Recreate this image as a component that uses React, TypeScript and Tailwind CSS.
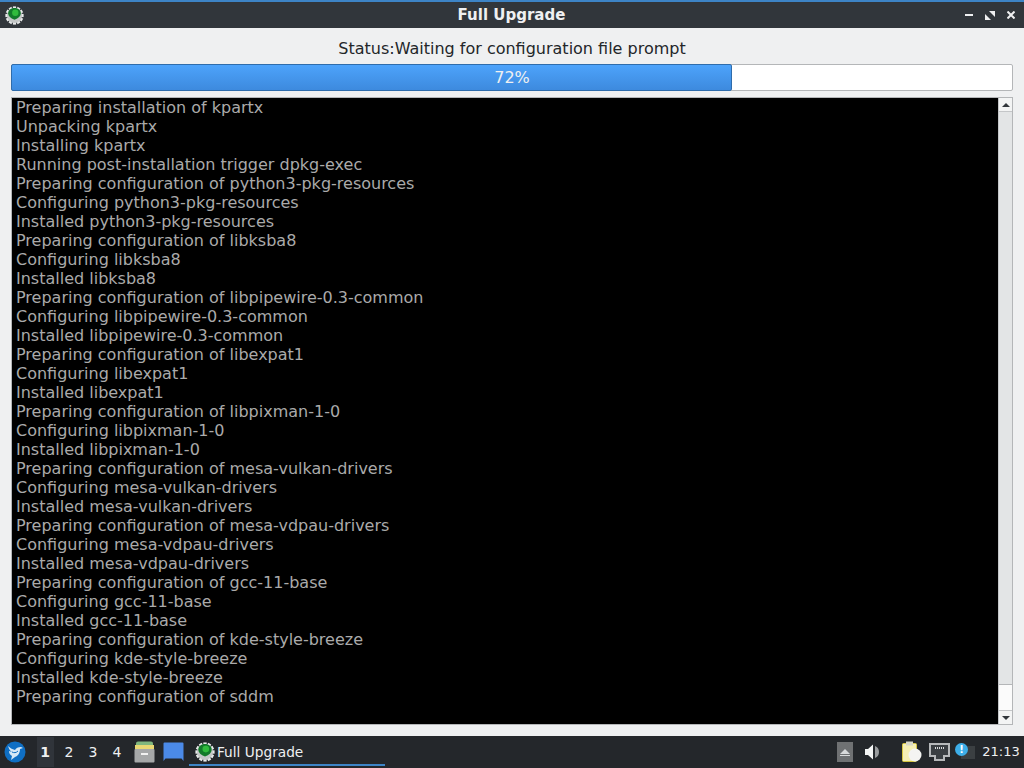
const logLines = [
  "Preparing installation of kpartx",
  "Unpacking kpartx",
  "Installing kpartx",
  "Running post-installation trigger dpkg-exec",
  "Preparing configuration of python3-pkg-resources",
  "Configuring python3-pkg-resources",
  "Installed python3-pkg-resources",
  "Preparing configuration of libksba8",
  "Configuring libksba8",
  "Installed libksba8",
  "Preparing configuration of libpipewire-0.3-common",
  "Configuring libpipewire-0.3-common",
  "Installed libpipewire-0.3-common",
  "Preparing configuration of libexpat1",
  "Configuring libexpat1",
  "Installed libexpat1",
  "Preparing configuration of libpixman-1-0",
  "Configuring libpixman-1-0",
  "Installed libpixman-1-0",
  "Preparing configuration of mesa-vulkan-drivers",
  "Configuring mesa-vulkan-drivers",
  "Installed mesa-vulkan-drivers",
  "Preparing configuration of mesa-vdpau-drivers",
  "Configuring mesa-vdpau-drivers",
  "Installed mesa-vdpau-drivers",
  "Preparing configuration of gcc-11-base",
  "Configuring gcc-11-base",
  "Installed gcc-11-base",
  "Preparing configuration of kde-style-breeze",
  "Configuring kde-style-breeze",
  "Installed kde-style-breeze",
  "Preparing configuration of sddm",
];

// green gear used for the window and the task button
function GearIcon({ size }: { size: number }) {
  const teeth = [0, 30, 60, 90, 120, 150];
  return (
    <svg width={size} height={size} viewBox="0 0 24 24">
      {teeth.map((a) => (
        <rect key={a} x="10" y="0.5" width="4" height="23" fill="#e8eaea" transform={`rotate(${a} 12 12)`} />
      ))}
      <circle cx="12" cy="12" r="9.5" fill="#c4c7c7" />
      <path d="M12 2.5c5 0 8 3 8 7 0 3-3 6-8 8-5-2-8-5-8-8 0-4 3-7 8-7z" fill="#127a2a" />
      <circle cx="13" cy="8.500" r="4" fill="#30bb3c" />
    </svg>
  );
}

function TitleBar() {
  return (
    <div className="h-[28px] shrink-0 border-t-2 border-[#3d84c6] bg-[#31363b] flex items-center pl-[5px] pr-[9px]">
      <GearIcon size={19} />
      <div className="flex-1 text-center text-[#eff0f1] text-[15px] font-bold pl-[34px]">Full Upgrade</div>
      <div className="flex items-center gap-[12px]">
        <div className="w-[8px] h-[2px] bg-[#eff0f1]" />
        <svg width="10" height="9" viewBox="0 0 10 9" fill="#eff0f1">
          <path d="M4 0h6v6z" />
          <path d="M0 3v6h6z" />
        </svg>
        <svg width="8" height="8" viewBox="0 0 8 8" stroke="#eff0f1" strokeWidth="2">
          <path d="M0.5 0.5l7 7M7.500 0.500l-7 7" />
        </svg>
      </div>
    </div>
  );
}

function ProgressBar() {
  return (
    <div className="relative h-[27px] mx-[11px] rounded-[2px] border border-[#b4b6b8] bg-white">
      <div className="absolute -left-px -top-px -bottom-px w-[721px] rounded-[2px] border border-[#2f6cab] bg-gradient-to-b from-[#4da3fb] to-[#3d8ade]" />
      <div className="absolute inset-0 flex items-center justify-center text-[16px] text-[#eff0f1]">72%</div>
    </div>
  );
}

function Scrollbar() {
  return (
    <div className="w-[14px] shrink-0 flex flex-col bg-[#e3e5e6] border-l border-[#c4c6c8]">
      <div className="h-[14px] bg-[#f3f4f4] border-b border-[#c4c6c8] flex items-center justify-center">
        <div className="w-0 h-0 border-l-[4px] border-r-[4px] border-b-[4px] border-l-transparent border-r-transparent border-b-[#31363b]" />
      </div>
      <div className="flex-1" />
      <div className="h-[26px] bg-[#fbfbfb] border-t border-[#b4b6b8]" />
      <div className="h-[14px] bg-[#f3f4f4] border-t border-[#c4c6c8] flex items-center justify-center">
        <div className="w-0 h-0 border-l-[4px] border-r-[4px] border-t-[4px] border-l-transparent border-r-transparent border-t-[#31363b]" />
      </div>
    </div>
  );
}

function Taskbar() {
  return (
    <div className="h-[32px] shrink-0 bg-[#24272b] flex items-center text-[#eff0f1] text-[14px]">
      {/* start button */}
      <div className="w-[33px] flex justify-center pr-[3px]">
        <svg width="22" height="22" viewBox="0 0 22 22">
          <circle cx="11" cy="11" r="10.500" fill="#0f6fc4" />
          <path d="M4 5c2 2 4 3 7 4 1-2 3-3 6-3l2 1-3 1c0 4-2 7-5 8l-4 3 1-4c-2-1-3-3-3-5l3 1c-2-1-3-3-4-6z" fill="#d6e8f6" />
          <path d="M8 11c2 1 4 1 6-1" stroke="#0f6fc4" strokeWidth="1" fill="none" />
        </svg>
      </div>
      <div className="flex">
        <div className="w-[24px] h-[32px] flex items-center justify-center">
          <div className="w-[17px] h-[30px] flex items-center justify-center bg-[#30343a] font-bold">1</div>
        </div>
        <div className="w-[24px] h-[32px] flex items-center justify-center">2</div>
        <div className="w-[24px] h-[32px] flex items-center justify-center">3</div>
        <div className="w-[24px] h-[32px] flex items-center justify-center">4</div>
      </div>
      <div className="ml-[3px] w-[24px] flex justify-center">
        <svg width="21" height="22" viewBox="0 0 21 22">
          <path d="M2 2.500a2 2 0 0 1 2-2h13a2 2 0 0 1 2 2V6H2z" fill="#7fb77e" />
          <rect x="1" y="4" width="19" height="4" fill="#e8d873" />
          <rect x="0.500" y="8" width="20" height="13.500" rx="1" fill="#a6a8a9" />
          <rect x="7" y="12" width="7" height="2" fill="#f2f2f2" />
        </svg>
      </div>
      <div className="w-[34px] flex justify-center">
        <svg width="21" height="20" viewBox="0 0 21 20">
          <path d="M0.500 1.500a1 1 0 0 1 1-1h18a1 1 0 0 1 1 1V19l-2-2.500H2.500L0.500 19z" fill="#4b8ae8" />
        </svg>
      </div>
      <div className="relative w-[196px] h-[32px] -ml-[1px] flex items-center gap-[2px] pl-[6px] text-[13.700px]">
        <GearIcon size={20} />
        <span>Full Upgrade</span>
        <div className="absolute left-0 right-0 bottom-[2px] h-[2px] bg-[#3d84c6]" />
      </div>
      <div className="flex-1" />
      <div className="w-[16px] h-[20px] bg-[#6f7173] flex items-center justify-center">
        <div className="flex flex-col items-center gap-[1px]">
          <div className="w-0 h-0 border-l-[5px] border-r-[5px] border-b-[5px] border-l-transparent border-r-transparent border-b-[#d8dadb]" />
          <div className="w-[10px] h-[1px] bg-[#d8dadb]" />
        </div>
      </div>
      <div className="ml-[12px] w-[17px] flex justify-center">
        <svg width="17" height="16" viewBox="0 0 17 16" fill="#f4f5f5">
          <path d="M0 5h3l5-4.500v15L3 11H0z" />
          <path d="M10 2a6.500 6.500 0 0 1 0 12z" fill="#9a9c9e" />
        </svg>
      </div>
      <div className="ml-[20px] w-[20px] flex justify-center">
        <svg width="20" height="22" viewBox="0 0 20 22">
          <rect x="0.500" y="2.500" width="14" height="18" rx="1" fill="#f6efb4" stroke="#d8c640" />
          <rect x="4" y="0.500" width="7" height="4" fill="#d8d8c8" />
          <circle cx="13" cy="14" r="6.500" fill="#f4f4f2" />
        </svg>
      </div>
      <div className="ml-[7px] w-[21px] flex justify-center">
        <svg width="21" height="18" viewBox="0 0 21 18">
          <path d="M1 1h19v12h-5v4H6v-4H1z" fill="#3a3e42" stroke="#b6b8ba" strokeWidth="2" />
          <path d="M6 5h9" stroke="#d8dadb" strokeDasharray="1 1" strokeWidth="2" />
        </svg>
      </div>
      <div className="ml-[5px] relative w-[20px] h-[20px]">
        <div className="absolute left-[6px] top-[4px] w-[14px] h-[13px] bg-[#3b3f42]" />
        <div className="absolute left-0 top-[1px] w-[13px] h-[13px] rounded-full bg-[#3daee9] flex items-center justify-center text-white text-[10px] font-bold leading-none">!</div>
      </div>
      <div className="w-[46px] ml-[3px] text-center text-[13px]">21:13</div>
    </div>
  );
}

export default function App() {
  return (
    <div className="w-[1024px] h-[768px] overflow-hidden flex flex-col bg-[#eff0f1] font-['DejaVu_Sans',sans-serif]">
      <TitleBar />
      <div className="flex-1 flex flex-col min-h-0">
        <div className="h-[36px] pt-[6px] shrink-0 flex items-center justify-center text-[16px] text-[#232629]">Status:Waiting for configuration file prompt</div>
        <ProgressBar />
        <div className="flex-1 mx-[11px] mt-[6px] mb-[11px] flex min-h-0 border border-[#b4b6b8]">
          <div className="flex-1 bg-black pl-[4px] text-[16px] leading-[19px] text-[#aaaaaa] overflow-hidden">
            {logLines.map((line, i) => (
              <div key={i}>{line}</div>
            ))}
          </div>
          <Scrollbar />
        </div>
      </div>
      <Taskbar />
    </div>
  );
}
